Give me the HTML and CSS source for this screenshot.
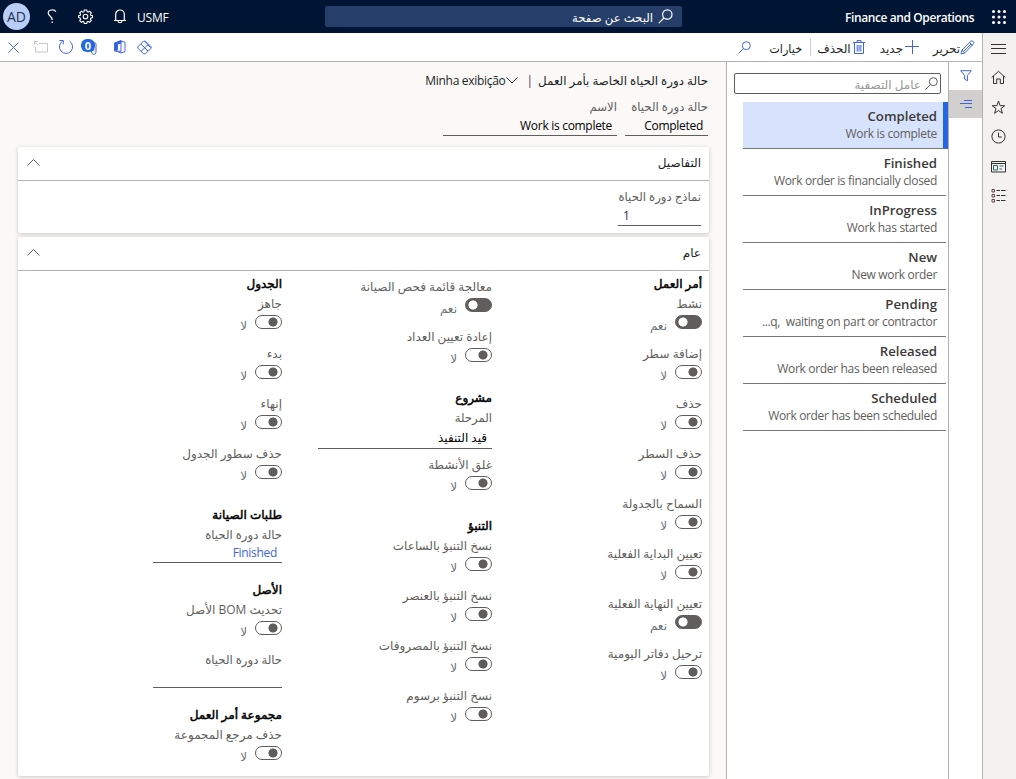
FILE: index.html
```html
<!DOCTYPE html>
<html lang="ar" dir="rtl">
<head>
<meta charset="utf-8">
<title>Finance and Operations</title>
<link rel="stylesheet" href="styles.css">
</head>
<body>
<header class="topbar">
  <svg class="waffle" width="14" height="14" viewBox="0 0 14 14" fill="#fff"><circle cx="1.500" cy="1.500" r="1.500"/><circle cx="7" cy="1.500" r="1.500"/><circle cx="12.500" cy="1.500" r="1.500"/><circle cx="1.500" cy="7" r="1.500"/><circle cx="7" cy="7" r="1.500"/><circle cx="12.500" cy="7" r="1.500"/><circle cx="1.500" cy="12.500" r="1.500"/><circle cx="7" cy="12.500" r="1.500"/><circle cx="12.500" cy="12.500" r="1.500"/></svg>
  <span class="brand">Finance and Operations</span>
  <div class="search">
    <svg width="15" height="15" viewBox="0 0 15 15" fill="none" stroke="#fff" stroke-width="1.2"><circle cx="9.300" cy="5.500" r="4.700"/><path d="M6 9L.8 14.200"/></svg>
    <span>البحث عن صفحة</span>
  </div>
  <div class="tools">
    <span class="company">USMF</span>
    <svg class="bell" width="12" height="15" viewBox="0 0 12 15" fill="none" stroke="#fff" stroke-width="1.2"><path d="M0 11.500h12M1.700 11.500V5.300a4.300 4.300 0 0 1 8.600 0v6.200M4 12c.3 2.300 3.700 2.300 4 0"/></svg>
    <svg class="gear" width="15" height="15" viewBox="0 0 15 15" fill="none" stroke="#fff" stroke-width="1.100"><path d="M6.300 1h2.400l.4 1.700 1 .4 1.500-.9 1.700 1.700-.9 1.500.4 1 1.700.4v1.800l-1.700.5-.4 1 .9 1.500-1.700 1.700-1.500-.9-1 .4-.4 1.700H6.300l-.4-1.700-1-.4-1.500.9-1.700-1.700.9-1.500-.4-1L.6 8.600V6.800l1.600-.4.4-1-.9-1.500 1.700-1.700 1.500.9 1-.4z"/><circle cx="7.500" cy="7.500" r="2.300"/></svg>
    <svg class="help" width="10" height="15" viewBox="0 0 10 15" fill="none" stroke="#fff" stroke-width="1.200"><path d="M8.800 2.800C7.800.2 1.200.2 1.200 4c0 3 4 3.200 4 7"/><path d="M4.600 12.500h1.300V14H4.600z" fill="#fff" stroke="none"/></svg>
    <span class="avatar">AD</span>
  </div>
</header>
<div class="shell">
  <nav class="rail">
    <svg viewBox="0 0 15 15"><path d="M0 3.500h15M0 7.500h15M0 12.500h15"/></svg>
    <svg viewBox="0 0 15 15"><path d="M.7 7.500L7.500 1.300l6.800 6.200M2.500 6v7.500h3.200V9h3.600v4.500h3.200V6"/></svg>
    <svg viewBox="0 0 15 15"><path d="M7.500 1l1.600 4.700h4.700L10 8.600l1.400 4.700-3.900-2.800-3.900 2.800L5 8.600 1.200 5.700h4.700z"/></svg>
    <svg viewBox="0 0 15 15"><circle cx="7.500" cy="7.500" r="6.600"/><path d="M7.500 3.500V8h3.300"/></svg>
    <svg viewBox="0 0 15 15"><path d="M.5 2.500h14v10.500H.5zM.5 4.500h14"/><path d="M2.500 6.500h4v4.500h-4zM8.500 7h4M8.500 10h2.500" stroke="#2d6b62"/></svg>
    <svg viewBox="0 0 15 15"><path d="M1 1.500h2.500v2.500H1zM1 6.500h2.500v2.500H1zM1 11.500h2.500v2.500H1z" stroke="#6a3f4c"/><path d="M5.500 2.500H9M10 2.500h4.500M5.500 7.500H9M10 7.500h4.500M5.500 12.500H9M10 12.500h4.500"/></svg>
  </nav>
  <div class="workspace">
    <div class="actions">
      <svg width="15" height="15" viewBox="0 0 15 15"><path d="M1 14l1-4L11 1.200c1.500-1 3.500 1 2.600 2.500L4.800 12.900zM9.500 2.500l3 3M2 10l2.800 2.900M3.500 11.500l7.500-7.500"/></svg>
      <span class="action edit">تحرير</span>
      <svg class="plus" width="14" height="14" viewBox="0 0 14 14"><path d="M7.500 0v14M0 6.500h14"/></svg>
      <span class="action new">جديد</span>
      <svg class="trash" width="12" height="14" viewBox="0 0 12 14"><path d="M0 2.500h12M4 2.500V.6h4v1.900M1.500 2.500v11h9v-11M4.200 5v6.500M6 5v6.500M7.800 5v6.500"/></svg>
      <span class="action del">الحذف</span>
      <i class="divider"></i>
      <span class="action options">خيارات</span>
      <svg class="find" width="13" height="13" viewBox="0 0 13 13"><circle cx="8.300" cy="4.700" r="4"/><path d="M5.500 7.500L.5 12.500"/></svg>
      <div class="system">
        <svg class="s-apps" width="15" height="15" viewBox="0 0 15 15"><path d="M6.500 1.200h2l5.700 5.700v1.200l-5.700 5.700h-2L.8 8.100V6.900zM3.800 4l7 7M7.500 1.200L11 4.700 4 11.300M11 4.500v.5l2.500 2.500M11 11L7.500 7.500"/></svg>
        <svg class="s-office" width="12" height="14" viewBox="0 0 12 14"><path d="M7 1l4 1.300v9.400L7 13 1 10.700l6 .8V2.500L3.500 4v5.500L1 10.500v-7z" fill="#fff"/><path d="M7 .5L.5 3v8L3.200 9.500V4L7 3z" fill="#2266e3"/></svg>
        <div class="attach"><svg width="16" height="17" viewBox="0 0 16 17"><path d="M10.500 7v6c0 3 4.500 3 4.500 0V5c0-1.500-2.200-1.500-2.200 0v7"/></svg><b>0</b></div>
        <svg class="s-refresh" width="16" height="16" viewBox="0 0 16 16"><path d="M11.500 2.200A6.600 6.600 0 1 1 4.500 2.200M1.500 1.500h3.800V5.300"/></svg>
        <svg class="s-pop" width="14" height="12" viewBox="0 0 14 12"><path d="M5 2.500h8.500v8.500h-12V6M.5 4V.5H4M.5.5L4 4"/></svg>
        <svg class="s-close" width="11" height="11" viewBox="0 0 11 11"><path d="M.5.5l10 10M10.500.5l-10 10"/></svg>
      </div>
    </div>
    <div class="panes">
      <div class="pane-tabs">
        <div class="tab"><svg width="12" height="12" viewBox="0 0 12 12"><path d="M.7.700h10.600L7.400 5.500v5.300L4.600 9V5.500z"/></svg></div>
        <div class="tab on"><svg width="12" height="8" viewBox="0 0 12 8"><path d="M4 .5h8M0 3.500h12M5 7.500h7"/></svg></div>
      </div>
      <aside class="list">
        <div class="filter"><svg width="13" height="13" viewBox="0 0 13 13"><circle cx="8.300" cy="4.700" r="4"/><path d="M5.500 7.500L.5 12.500"/></svg><span>عامل التصفية</span></div>
        <ul>
          <li class="sel"><b>Completed</b><span>Work is complete</span></li>
          <li><b>Finished</b><span>Work order is financially closed</span></li>
          <li><b>InProgress</b><span>Work has started</span></li>
          <li><b>New</b><span>New work order</span></li>
          <li><b>Pending</b><span>...q,&nbsp; waiting on part or contractor</span></li>
          <li><b>Released</b><span>Work order has been released</span></li>
          <li><b>Scheduled</b><span>Work order has been scheduled</span></li>
        </ul>
      </aside>
      <main class="detail">
        <div class="crumb"><span class="ar">حالة دورة الحياة الخاصة بأمر العمل</span><i>|</i><svg width="12" height="7" viewBox="0 0 12 7"><path d="M.5.500L6 6 11.500.5"/></svg><span class="view">Minha exibição</span></div>
        <div class="head-fields">
          <div class="field w83 tall"><label>حالة دورة الحياة</label><div class="value en">Completed</div></div>
          <div class="field w174 tall"><label>الاسم</label><div class="value en">Work is complete</div></div>
        </div>
        <section class="card">
          <div class="card-head"><span>التفاصيل</span><svg width="13" height="7" viewBox="0 0 13 7"><path d="M.5 6.500l6-6 6 6"/></svg></div>
          <div class="card-body small"><div class="field w83 tall"><label>نماذج دورة الحياة</label><div class="value num">1</div></div></div>
        </section>
        <section class="card general">
          <div class="card-head"><span>عام</span><svg width="13" height="7" viewBox="0 0 13 7"><path d="M.5 6.500l6-6 6 6"/></svg></div>
          <div class="card-body cols">
            <div class="col">
              <h3>أمر العمل</h3>
              <div class="opt yes"><label>نشط</label><div><i></i><span>نعم</span></div></div>
              <div class="opt"><label>إضافة سطر</label><div><i></i><span>لا</span></div></div>
              <div class="opt"><label>حذف</label><div><i></i><span>لا</span></div></div>
              <div class="opt"><label>حذف السطر</label><div><i></i><span>لا</span></div></div>
              <div class="opt"><label>السماح بالجدولة</label><div><i></i><span>لا</span></div></div>
              <div class="opt"><label>تعيين البداية الفعلية</label><div><i></i><span>لا</span></div></div>
              <div class="opt yes"><label>تعيين النهاية الفعلية</label><div><i></i><span>نعم</span></div></div>
              <div class="opt"><label>ترحيل دفاتر اليومية</label><div><i></i><span>لا</span></div></div>
            </div>
            <div class="col mid">
              <div class="opt yes"><label>معالجة قائمة فحص الصيانة</label><div><i></i><span>نعم</span></div></div>
              <div class="opt"><label>إعادة تعيين العداد</label><div><i></i><span>لا</span></div></div>
              <h3 class="gap">مشروع</h3>
              <div class="field stage"><label>المرحلة</label><div class="value">قيد التنفيذ</div></div>
              <div class="opt"><label>غلق الأنشطة</label><div><i></i><span>لا</span></div></div>
              <h3 class="gap">التنبؤ</h3>
              <div class="opt"><label>نسخ التنبؤ بالساعات</label><div><i></i><span>لا</span></div></div>
              <div class="opt"><label>نسخ التنبؤ بالعنصر</label><div><i></i><span>لا</span></div></div>
              <div class="opt"><label>نسخ التنبؤ بالمصروفات</label><div><i></i><span>لا</span></div></div>
              <div class="opt"><label>نسخ التنبؤ برسوم</label><div><i></i><span>لا</span></div></div>
            </div>
            <div class="col">
              <h3>الجدول</h3>
              <div class="opt"><label>جاهز</label><div><i></i><span>لا</span></div></div>
              <div class="opt"><label>بدء</label><div><i></i><span>لا</span></div></div>
              <div class="opt"><label>إنهاء</label><div><i></i><span>لا</span></div></div>
              <div class="opt"><label>حذف سطور الجدول</label><div><i></i><span>لا</span></div></div>
              <h3 class="gap">طلبات الصيانة</h3>
              <div class="field w129"><label>حالة دورة الحياة</label><div class="value en link">Finished</div></div>
              <h3 class="gap-field">الأصل</h3>
              <div class="opt"><label>تحديث BOM الأصل</label><div><i></i><span>لا</span></div></div>
              <div class="field w129"><label>حالة دورة الحياة</label><div class="value"></div></div>
              <h3 class="gap-field">مجموعة أمر العمل</h3>
              <div class="opt"><label>حذف مرجع المجموعة</label><div><i></i><span>لا</span></div></div>
            </div>
          </div>
        </section>
      </main>
    </div>
  </div>
</div>
</body>
</html>
```

FILE: styles.css
```css
* { box-sizing: border-box; }
html, body { height: 100%; }
body { margin: 0; overflow: hidden; display: flex; flex-direction: column; font: 12px "Open Sans", "DejaVu Sans", sans-serif; color: #201f1e; background: #faf9f8; }
i { font-style: normal; }
svg { flex: none; display: block; }

/* Top bar */
.topbar { flex: none; height: 33px; background: #001433; display: flex; align-items: center; color: #fff; padding: 0 10px 0 3px; }
.brand { font-weight: 600; letter-spacing: -.4px; margin-right: 18px; width: 129px; white-space: nowrap; direction: ltr; padding-top: 2px; }
.search { margin-right: 163px; width: 357px; height: 21px; background: #263f6a; border-radius: 2px; display: flex; align-items: center; padding: 0 9px; gap: 5px; }
.search span { font-size: 11.7px; }
.tools { margin-right: auto; display: flex; align-items: center; }
.company { letter-spacing: -.2px; direction: ltr; padding-top: 2px; }
.bell { margin-right: 11px; }
.gear { margin-right: 21px; }
.help { margin-right: 21px; }
.avatar { width: 27px; height: 27px; border-radius: 50%; background: #b8cdf8; color: #24324f; font-size: 14px; display: grid; place-items: center; margin-right: 17px; }

/* Navigation rail */
.shell { flex: 1; min-height: 0; display: flex; }
.rail { width: 34px; background: #f3f2f1; border-left: 1px solid #b5b1ad; display: flex; flex-direction: column; align-items: center; padding: 8px 2px 0 0; gap: 14.4px; }
.rail svg { width: 15px; height: 15px; fill: none; stroke: #323130; }
.workspace { flex: 1; min-width: 0; display: flex; flex-direction: column; }

/* Action bar */
.actions { flex: none; height: 29px; background: #fff; border-bottom: 1px solid #b5b3b1; display: flex; align-items: center; padding: 0 7px 0 8px; }
.actions svg { fill: none; stroke: #4165e0; stroke-width: 1; }
.action { white-space: nowrap; padding-top: 2px; }
.edit { font-size: 11.7px; }
.plus { margin-right: 14px; }
.new { margin-right: 2px; }
.trash { margin-right: 15px; }
.del { margin-right: 2px; }
.divider { width: 1px; height: 18px; background: #d2d0ce; margin: 0 6px 0 8px; }
.options { font-size: 11.3px; }
.find { margin-right: 18px; }
.system { margin-right: auto; display: flex; align-items: center; }
.s-apps { margin-left: -1px; }
.s-office { margin-right: 12px; }
.attach { position: relative; margin-right: 17px; }
.attach b { position: absolute; left: 0; top: 0; width: 14px; height: 13px; border-radius: 6px; background: #2266e3; color: #fff; font-size: 11px; line-height: 13px; text-align: center; }
.s-refresh { margin-right: 7px; }
.actions .s-pop { margin-right: 10px; stroke: #c8c6c4; }
.s-close { margin-right: 15px; }

/* List pane */
.panes { flex: 1; min-height: 0; display: flex; }
.pane-tabs { width: 33px; background: #fff; }
.tab { height: 28px; display: grid; place-items: center; }
.tab svg { fill: none; stroke: #4165e0; }
.tab.on { background: #d2d0ce; }
.list { width: 223px; background: #fff; border: solid #b5b1ad; border-width: 0 1px; padding-top: 11px; }
.filter { width: 207px; height: 21px; margin-right: 7px; border: 1px solid #605e5c; border-radius: 2px; display: flex; align-items: center; padding: 0 2px; gap: 4px; color: #9a9896; }
.filter svg { fill: none; stroke: #605e5c; }
.filter span { padding-top: 2px; }
.list ul { list-style: none; margin: 8px 0 0; padding: 0; width: 205px; }
.list li { height: 47px; border-bottom: 1px solid #797775; margin-right: 2px; padding: 5px 9px 0 0; text-align: right; }
.list b { display: block; font-weight: 600; font-size: 13.2px; line-height: 18px; color: #3b3a39; direction: ltr; }
.list li span { display: block; line-height: 17px; letter-spacing: -.33px; color: #605e5c; white-space: nowrap; direction: ltr; }
.list .sel { background: #d7e3fc; border-right: 5px solid #2266e3; margin-right: 0; padding-right: 6px; }

/* Record details */
.detail { flex: 1; min-width: 0; padding: 0 17px 0 18px; }
.crumb { display: flex; align-items: center; height: 20px; margin: 8px 0 0; padding-right: 1px; }
.crumb .ar { font-size: 11.85px; }
.crumb i { margin: 0 5px 0 9px; color: #5a2a5a; }
.crumb svg { fill: none; stroke: #323130; }
.view { letter-spacing: -.3px; direction: ltr; }
.head-fields { display: flex; gap: 8px; margin-top: 8px; height: 49px; padding-right: 1px; }
.field label, .opt label { display: block; color: #605e5c; line-height: 17px; height: 17px; white-space: nowrap; }
.field label { font-size: 11.7px; }
.tall label { height: 18px; }
.opt label, .stage label { height: 20px; }
.value { height: 20px; border-bottom: 1px solid #605e5c; line-height: 20px; padding: 0 5px; white-space: nowrap; color: #000; }
.stage .value { line-height: 18px; }
.en { letter-spacing: -.3px; }
.num { direction: ltr; color: #2b2b55; }
.link { color: #4165e0; }
.w83 { width: 83px; }
.w174 { width: 174px; }
.w129 { width: 129px; }
.stage { width: 174px; margin-bottom: 7px; }
.card { background: #fff; border-radius: 2px; box-shadow: 0 1px 4px #0003; }
.card-head { height: 34px; border-bottom: 1px solid #b5b3b1; display: flex; align-items: center; justify-content: space-between; padding: 0 8px 2px 9px; }
.card-head svg { fill: none; stroke: #605e5c; }
.card-body.small { height: 52px; padding: 7px 8px 0; }
.general { margin-top: 4px; height: 539px; }
.cols { display: flex; padding: 4px 7px 0; }
.col { width: 210px; }
.mid { padding-top: 3px; }
.col h3 { margin: 0; font-size: 12px; font-weight: 400; color: #000; -webkit-text-stroke: .5px; height: 20px; line-height: 18px; }
.col .gap { margin-top: 11px; }
.col .gap-field { margin-top: 18px; }

/* Switches */
.opt { height: 50px; }
.opt > div { display: flex; height: 20px; }
.opt i { width: 27px; height: 14px; border: 1px solid #605e5c; border-radius: 7px; background: radial-gradient(circle at 17px 6px, #605e5c 4.2px, #fff 4.900px); }
.yes i { background: radial-gradient(circle at 7px 6px, #fff 4.200px, #605e5c 4.900px); }
.opt span { margin-right: 8px; padding-top: 2px; color: #6b7078; }
```
